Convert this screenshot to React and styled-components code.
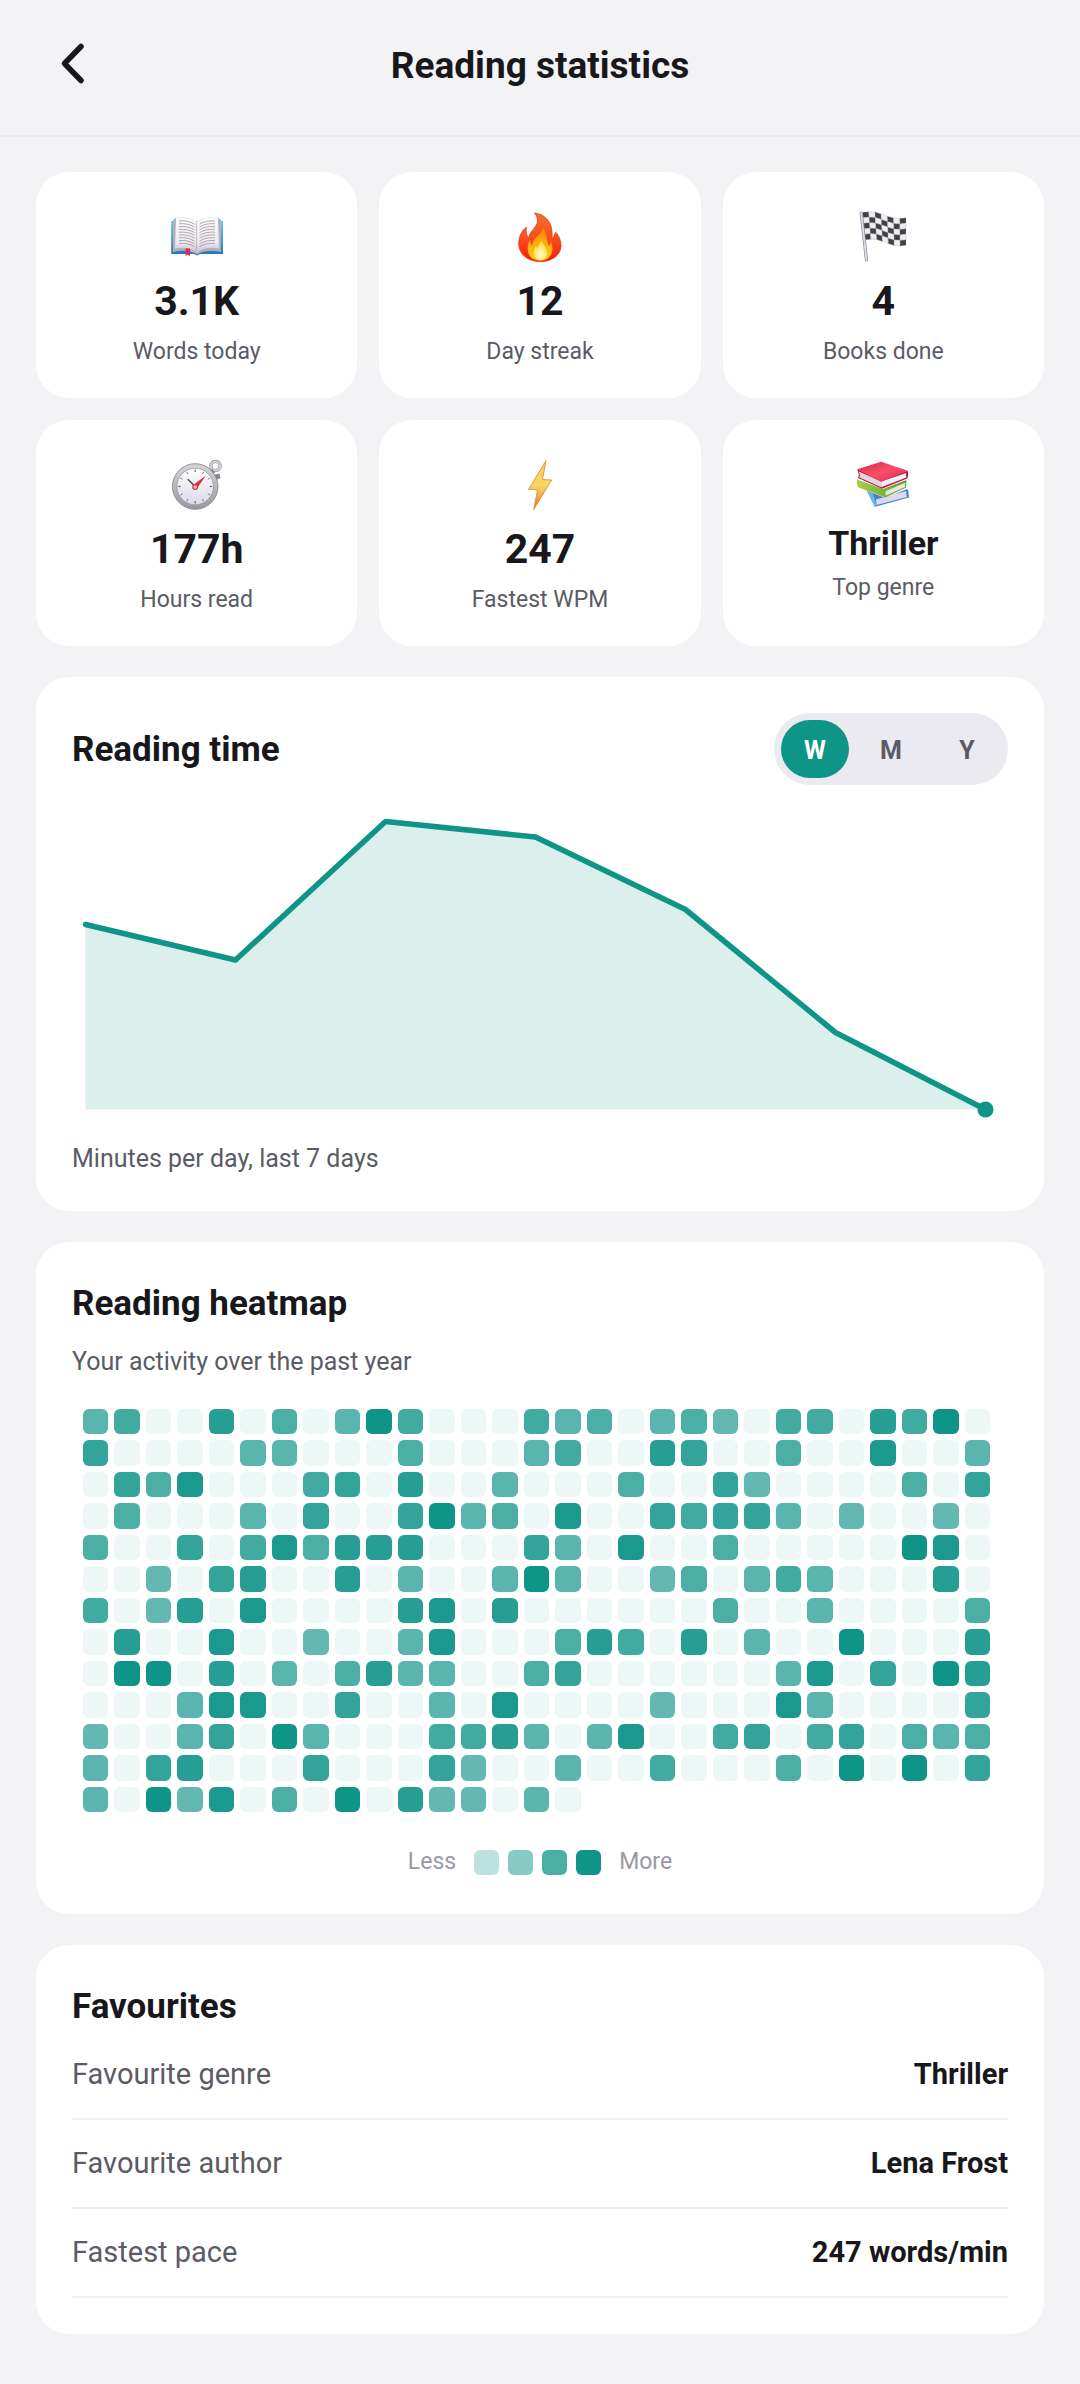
import React, { useState } from 'react';
import styled, { createGlobalStyle } from 'styled-components';

const TEAL = '#0f9488';

const HEATMAP = [
    '24..6.3.284...423.231.44.648.',
    '5....22...3...24..65..3..7..2',
    '.537...45.6..2...3..51....3.5',
    '.3...2.5..5823.7..54552.1..1.',
    '3..5.473666...52.7..3.....87.',
    '..1.56..6.2..282..13.242...6.',
    '4.16.7....67.6......3..2....3',
    '.6..7..1..27...364.6.2..8...6',
    '.88.6.2.3622..35......27.5.86',
    '...277..5..2.7....1...72....5',
    '1..25.82...4462.27..45.45.323',
    '2.56...5...51..2..4...3.8.8.5',
    '2.817.3.8.611.2.',
];

// opacity of a heatmap cell for each level, level 0 is an empty day
const LEVELS = [0.08, 0.65, 0.69, 0.75, 0.79, 0.85, 0.9, 0.95, 1];
const LEGEND = [0.28, 0.5, 0.75, 1];

const CHART = [
    [13.5, 127.5],
    [163.5, 163],
    [313.5, 24.5],
    [463.5, 40],
    [613.5, 112.5],
    [763.5, 235.5],
    [913.5, 312.5],
];

const FAVOURITES = [
    { label: 'Favourite genre', value: 'Thriller' },
    { label: 'Favourite author', value: 'Lena Frost' },
    { label: 'Fastest pace', value: '247 words/min' },
];

const BookIcon = () => (
    <Icon viewBox="0 0 54 54" aria-hidden="true">
        <defs>
            <linearGradient id="bookCover" x1="0" y1="0" x2="0" y2="1">
                <stop offset="0" stopColor="#6cc8f0" />
                <stop offset="1" stopColor="#2272c0" />
            </linearGradient>
            <linearGradient id="bookPage" x1="0" y1="0" x2="0" y2="1">
                <stop offset="0" stopColor="#fbfbfb" />
                <stop offset="0.7" stopColor="#eee9f2" />
                <stop offset="1" stopColor="#c9bfd0" />
            </linearGradient>
        </defs>
        <path d="M1.2 11h51.8v33H30l-3 1.5-3-1.5H1.2z" fill="url(#bookCover)" />
        <path d="M3 10 6 7.5C14 6.5 22 8 27 12c5-4 13-5.5 21-4.5l3 2.5v32c-9-2-18-1.5-24 2.5-6-4-15-4.5-24-2.5z" fill="#b3b0b8" />
        <path d="M6 7.5C14 6.5 22 8 27 12v31c-5-5-13-6-22-4.5z" fill="url(#bookPage)" />
        <path d="M48 7.5C40 6.5 32 8 27 12v31c5-5 13-6 22-4.5z" fill="url(#bookPage)" />
        <path d="M26.5 13v29" stroke="#aaa3b0" strokeWidth="1.2" opacity="0.6" />
        {[0, 1, 2, 3, 4, 5, 6, 7, 8].map((i) => (
            <path
                key={i}
                d={`M9 ${11 + i * 2.8}q9-.8 15.5 3.2M45 ${11 + i * 2.8}q-9-.8-15.5 3.2`}
                fill="none"
                stroke="#8d8d91"
                strokeWidth="0.7"
            />
        ))}
        <path d="M15.5 38.5h4.5v7.5l-2.2-1.5-2.3 1.5z" fill="#e0254f" />
    </Icon>
);

const FireIcon = () => (
    <Icon viewBox="0 0 54 54" aria-hidden="true">
        <defs>
            <linearGradient id="fireOuter" x1="0" y1="0" x2="0" y2="1">
                <stop offset="0" stopColor="#f4712f" />
                <stop offset="0.5" stopColor="#f7501e" />
                <stop offset="1" stopColor="#f81c08" />
            </linearGradient>
            <linearGradient id="fireMid" x1="0" y1="0" x2="0" y2="1">
                <stop offset="0" stopColor="#fb7d18" />
                <stop offset="0.6" stopColor="#fdb50c" />
                <stop offset="1" stopColor="#ffd21f" />
            </linearGradient>
            <radialGradient id="fireCore" cx="0.5" cy="0.7" r="0.6">
                <stop offset="0" stopColor="#fffbd8" />
                <stop offset="1" stopColor="#ffdf3a" />
            </radialGradient>
        </defs>
        <path
            d="M21.4 3C31 4 38.5 11 39 22c.2 3 0 5 .5 6.5 1.8-1.3 1.6-4 3.2-6.2C46 26 48.3 31 48 36.5 47.5 45 39 51.6 27.4 51.6S6.5 45 5.8 35c-.5-7 2.5-14 7.5-17.7-.5 5 .2 8.5 2.5 11 0-7 8.2-10 8.7-17 .2-3.5-1-6-3.1-8.3z"
            fill="url(#fireOuter)"
            stroke="#e23413"
            strokeWidth="0.8"
        />
        <path d="M30 17c4 8 3 12 6 19 1-1 1.500-2.500 1.800-4.500C42 40 38 50.500 27.500 50.500S13.500 43 15 35c.4-2 1-3.500 2.200-5 0 3 .6 4.500 2.300 6C18.500 27 30 26 30 17z" fill="url(#fireMid)" />
        <path d="M28 30c1.500 3.500 6 7 6 13 0 4.500-3 7.300-6.500 7.300S21 47 21 42.500c0-3 .8-5 2-6.500.5 1.500 1 2.200 2 2.800-.2-3.800 3-5.300 3-8.800z" fill="url(#fireCore)" />
    </Icon>
);

// point of the waving cloth, u goes along the flag and v down it
const clothPoint = (u, v) => {
    const x = 6.5 + u * 43.5 + v * 2.5 * (1 - u);
    const y = 2.3 + u * 5.5 + v * 27.5 - Math.sin(u * Math.PI * 2) * 1.8;
    return `${x.toFixed(1)} ${y.toFixed(1)}`;
};

const FlagIcon = () => {
    const cells = [];
    for (let c = 0; c < 7; c++) {
        for (let r = 0; r < 5; r++) {
            const path = `M${clothPoint(c / 7, r / 5)}L${clothPoint((c + 1) / 7, r / 5)}L${clothPoint((c + 1) / 7, (r + 1) / 5)}L${clothPoint(c / 7, (r + 1) / 5)}z`;
            const dark = (c + r) % 2 === 0;
            cells.push(<path key={`${c}-${r}`} d={path} fill={dark ? '#414145' : '#efeef1'} stroke="#a9a8ad" strokeWidth="0.3" />);
        }
    }
    return (
        <Icon viewBox="0 0 54 54" aria-hidden="true">
            {cells}
            <path d="M5.2 3 10.5 50" stroke="#8f8b98" strokeWidth="3.2" strokeLinecap="round" />
            <path d="M5.2 3 10.5 50" stroke="#dedce4" strokeWidth="1.8" strokeLinecap="round" />
        </Icon>
    );
};

const StopwatchIcon = () => (
    <Icon viewBox="0 0 54 54" aria-hidden="true">
        <defs>
            <linearGradient id="watchRim" x1="0" y1="0" x2="0" y2="1">
                <stop offset="0" stopColor="#d6d6d8" />
                <stop offset="1" stopColor="#98979f" />
            </linearGradient>
            <linearGradient id="watchFace" x1="0" y1="0" x2="0" y2="1">
                <stop offset="0" stopColor="#ffffff" />
                <stop offset="1" stopColor="#dcd9ea" />
            </linearGradient>
        </defs>
        <circle cx="45.5" cy="8" r="4.6" fill="none" stroke="#8f8f93" strokeWidth="3.2" />
        <circle cx="45.5" cy="8" r="4.6" fill="none" stroke="#d3d3d5" strokeWidth="2" />
        <path d="m38 14 4-3 3 3-3 4zM44 17l5.5-1.5 1 4.5-4.5 2z" fill="#87878b" />
        <circle cx="25.2" cy="28.5" r="22.8" fill="url(#watchRim)" stroke="#7e7e84" strokeWidth="0.8" />
        <circle cx="25.2" cy="28.5" r="18.3" fill="url(#watchFace)" stroke="#98979e" strokeWidth="0.8" />
        {Array.from({ length: 12 }, (_, i) => (
            <path
                key={i}
                d="M25.2 11.5v2.5"
                stroke="#66656c"
                strokeWidth={i % 3 === 0 ? 1.2 : 0.8}
                transform={`rotate(${i * 30} 25.2 28.5)`}
            />
        ))}
        <path d="m25.2 28.5-7.4-7.2" stroke="#4a4a4d" strokeWidth="1.6" />
        <path d="m23.5 26.8 12.5-9.3-9 12.7z" fill="#e42b3c" />
        <circle cx="25.2" cy="29" r="2.4" fill="#f4c6cb" stroke="#e42b3c" strokeWidth="1.2" />
    </Icon>
);

const BoltIcon = () => (
    <Icon viewBox="0 0 54 54" aria-hidden="true">
        <defs>
            <linearGradient id="bolt" x1="0" y1="0" x2="0" y2="1">
                <stop offset="0" stopColor="#f9c95a" />
                <stop offset="0.5" stopColor="#fbd568" />
                <stop offset="1" stopColor="#e2761b" />
            </linearGradient>
        </defs>
        <path
            d="M33 2.5 29.5 21.5 38.7 22 20.7 51.5 24.5 32 15.5 31.3z"
            fill="url(#bolt)"
            stroke="#d98b2f"
            strokeWidth="0.8"
            strokeLinejoin="round"
        />
    </Icon>
);

const BooksIcon = () => (
    <Icon viewBox="0 0 54 54" aria-hidden="true">
        <defs>
            <linearGradient id="booksRed" x1="0" y1="0" x2="1" y2="1">
                <stop offset="0" stopColor="#d81f49" />
                <stop offset="0.5" stopColor="#fa5069" />
                <stop offset="1" stopColor="#e0264e" />
            </linearGradient>
            <linearGradient id="booksGreen" x1="0" y1="0" x2="1" y2="0">
                <stop offset="0" stopColor="#a5d14d" />
                <stop offset="1" stopColor="#5d9a24" />
            </linearGradient>
        </defs>
        <path d="M11 33 30 40l21-9q2 1 1.5 4l.5 4.5-34 9.3z" fill="#3f86d0" />
        <path d="m20 41.5 30.5-8.5q-1 3 .5 6L20.5 47z" fill="#ddd8ea" />
        <path d="m11 33 7.5 15.7 2-1.5L17 36z" fill="#69b4ee" />
        <path d="M1.2 21.5 27 31l23.5-9-.5 7.500-20.500 10L2.500 29.500Q0 25 1.200 21.500z" fill="url(#booksGreen)" />
        <path d="m30 33 19.500-8.500q-1 2 0 4.500L30 37.500q-1.500-2 0-4.500z" fill="#e9e6e4" />
        <path d="M1.2 11.300 25.200 22l26.600-9.300q1.200 4-.5 7.800L26 30.700 2 20q1-1.500.7-4z" fill="#b81a3f" />
        <path d="M2.8 13.500 25.200 23.500v5.800L3.500 19.500q1-2.500-.7-6z" fill="#ddd6df" />
        <path d="m25.200 23.500 25-8.500q-.8 2.500.2 4.500l-25.200 9.800z" fill="#f3eff2" />
        <path d="M1.2 11.300 25.200 3.700l26.600 9-26.600 11z" fill="url(#booksRed)" />
    </Icon>
);

const STATS = [
    { icon: BookIcon, value: '3.1K', label: 'Words today' },
    { icon: FireIcon, value: '12', label: 'Day streak' },
    { icon: FlagIcon, value: '4', label: 'Books done' },
    { icon: StopwatchIcon, value: '177h', label: 'Hours read' },
    { icon: BoltIcon, value: '247', label: 'Fastest WPM' },
    { icon: BooksIcon, value: 'Thriller', label: 'Top genre', small: true },
];

const App = () => {
    const [range, setRange] = useState('W');
    const line = CHART.map((p) => p.join(' ')).join('L');
    const [endX, endY] = CHART[CHART.length - 1];

    return (
        <>
            <GlobalStyle />
            <Header>
                <BackButton type="button" aria-label="Back">
                    <svg width="72" height="72" viewBox="0 0 72 72" aria-hidden="true">
                        <path d="M45 18.500 28.500 35.500l16.500 17" fill="none" stroke="#18181c" strokeWidth="5.500" strokeLinecap="round" strokeLinejoin="round" />
                    </svg>
                </BackButton>
                <PageTitle>Reading statistics</PageTitle>
            </Header>
            <Content>
                <StatGrid>
                    {STATS.map(({ icon: StatIcon, value, label, small }) => (
                        <StatCard key={label}>
                            <StatIcon />
                            <StatValue $small={small}>{value}</StatValue>
                            <StatLabel>{label}</StatLabel>
                        </StatCard>
                    ))}
                </StatGrid>

                <Card>
                    <CardHead>
                        <CardTitle>Reading time</CardTitle>
                        <Toggle role="group" aria-label="Range">
                            {['W', 'M', 'Y'].map((r) => (
                                <ToggleButton key={r} type="button" $active={r === range} aria-pressed={r === range} onClick={() => setRange(r)}>
                                    {r}
                                </ToggleButton>
                            ))}
                        </Toggle>
                    </CardHead>
                    <Chart viewBox="0 0 936 324" role="img" aria-label="Minutes read per day">
                        <path d={`M${line}L${CHART[0][0]} ${endY}z`} fill={TEAL} opacity="0.15" />
                        <path d={`M${line}`} fill="none" stroke={TEAL} strokeWidth="5.5" strokeLinecap="round" strokeLinejoin="round" />
                        <circle cx={endX} cy={endY} r="8" fill={TEAL} />
                    </Chart>
                    <Note>Minutes per day, last 7 days</Note>
                </Card>

                <Card>
                    <CardTitle>Reading heatmap</CardTitle>
                    <Subtitle>Your activity over the past year</Subtitle>
                    <HeatGrid>
                        {HEATMAP.join('').split('').map((c, i) => (
                            <Cell key={i} $level={c === '.' ? 0 : Number(c)} />
                        ))}
                    </HeatGrid>
                    <Legend>
                        <span>Less</span>
                        <Swatches>
                            {LEGEND.map((o) => <Swatch key={o} $opacity={o} />)}
                        </Swatches>
                        <span>More</span>
                    </Legend>
                </Card>

                <Card>
                    <CardTitle>Favourites</CardTitle>
                    <FavList>
                        {FAVOURITES.map(({ label, value }) => (
                            <FavRow key={label}>
                                <dt>{label}</dt>
                                <dd>{value}</dd>
                            </FavRow>
                        ))}
                    </FavList>
                </Card>
            </Content>
        </>
    );
};

export default App;

const GlobalStyle = createGlobalStyle`
  * {
    box-sizing: border-box;
  }
  body {
    margin: 0;
    background: #f3f3f6;
    color: #18181c;
    font-family: Roboto, sans-serif;
  }
`;

const Icon = styled.svg`
  width: 54px;
  height: 54px;
`;

const Header = styled.header`
  display: grid;
  grid-template-columns: 72px 1fr 72px;
  align-items: center;
  padding: 28px 36px 35px;
  border-bottom: 2px solid #eaeaee;
`;

const BackButton = styled.button`
  display: flex;
  width: 72px;
  height: 72px;
  padding: 0;
  border: none;
  background: none;
  cursor: pointer;
`;

const PageTitle = styled.h1`
  margin: 0;
  padding-top: 4px;
  font-size: 37px;
  line-height: 44px;
  font-weight: 700;
  text-align: center;
`;

const Content = styled.main`
  display: flex;
  flex-direction: column;
  gap: 31px;
  padding: 35px 36px 52px;
`;

const StatGrid = styled.section`
  display: grid;
  grid-template-columns: repeat(3, 1fr);
  gap: 22px;
`;

const StatCard = styled.div`
  display: flex;
  flex-direction: column;
  align-items: center;
  padding: 38px 12px 30px;
  border-radius: 33px;
  background: #fff;
`;

const StatValue = styled.strong`
  margin: 12px 0 10px;
  font-size: ${({ $small }) => ($small ? '34px' : '41px')};
  line-height: ${({ $small }) => ($small ? '38px' : '50px')};
  font-weight: 700;
`;

const StatLabel = styled.span`
  color: #5b5b66;
  font-size: 23px;
  line-height: 32px;
`;

const Card = styled.section`
  padding: 36px;
  border-radius: 33px;
  background: #fff;
`;

const CardHead = styled.div`
  display: flex;
  align-items: center;
  justify-content: space-between;
`;

const CardTitle = styled.h2`
  margin: 0;
  padding-top: 2px;
  font-size: 35px;
  line-height: 48px;
  font-weight: 700;
`;

const Toggle = styled.div`
  display: flex;
  gap: 8px;
  padding: 7px;
  border-radius: 36px;
  background: #ebeaf0;
`;

const ToggleButton = styled.button`
  width: 68px;
  height: 58px;
  padding: 2px 0 0;
  border: none;
  border-radius: 29px;
  background: ${({ $active }) => ($active ? TEAL : 'transparent')};
  color: ${({ $active }) => ($active ? '#fff' : '#5b5b66')};
  font-family: inherit;
  font-size: 25px;
  font-weight: 700;
  cursor: pointer;
`;

const Chart = styled.svg`
  display: block;
  width: 100%;
  margin: 12px 0 22px;
`;

const Note = styled.p`
  margin: 0;
  color: #5b5b66;
  font-size: 25px;
  line-height: 32px;
`;

const Subtitle = styled(Note)`
  margin: 18px 0 31px;
`;

const HeatGrid = styled.div`
  display: grid;
  grid-template-columns: repeat(29, 1fr);
  gap: 6px;
  padding: 0 18px 0 11px;
`;

const Cell = styled.span`
  aspect-ratio: 1;
  border-radius: 6px;
  background: ${TEAL};
  opacity: ${({ $level }) => LEVELS[$level]};
`;

const Legend = styled.div`
  display: flex;
  align-items: center;
  justify-content: center;
  gap: 18px;
  margin-top: 34px;
  color: #9a99a3;
  font-size: 23px;
  line-height: 32px;
`;

const Swatches = styled.div`
  display: flex;
  gap: 9px;
`;

const Swatch = styled.span`
  width: 25px;
  height: 25px;
  border-radius: 6px;
  background: ${TEAL};
  opacity: ${({ $opacity }) => $opacity};
`;

const FavList = styled.dl`
  margin: 0;
`;

const FavRow = styled.div`
  display: flex;
  justify-content: space-between;
  padding: 27px 0;
  border-bottom: 2px solid #f0f0f2;
  font-size: 29px;
  line-height: 33px;

  > dt {
    color: #5b5b66;
  }

  > dd {
    margin: 0;
    font-weight: 700;
  }
`;
